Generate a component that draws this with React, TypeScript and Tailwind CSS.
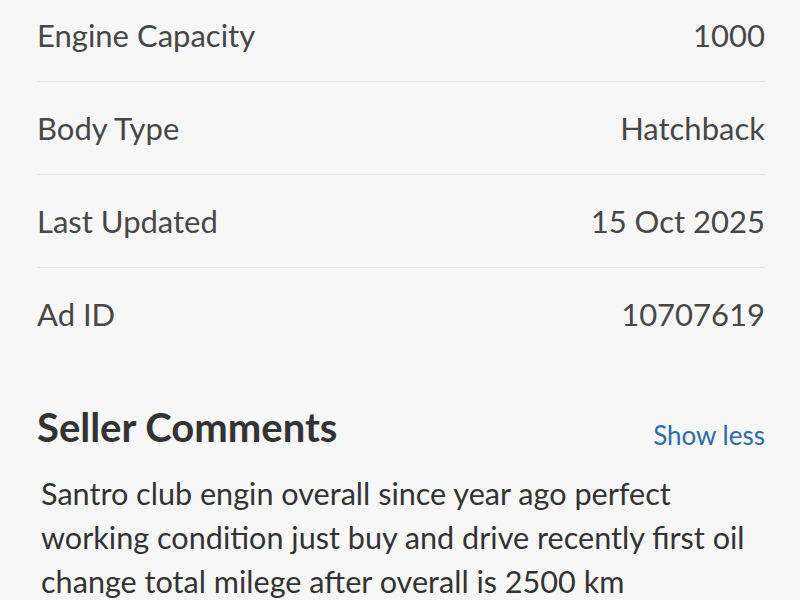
import React from 'react';

const specs = [
  { label: 'Engine Capacity', value: '1000' },
  { label: 'Body Type', value: 'Hatchback' },
  { label: 'Last Updated', value: '15 Oct 2025' },
  { label: 'Ad ID', value: '10707619' },
];

const SpecRow: React.FC<{ label: string; value: string; first?: boolean; last?: boolean }> = ({
  label,
  value,
  first,
  last,
}) => (
  <div
    className={`flex items-center justify-between ${first ? 'pt-[15px]' : 'pt-[26px]'} pb-[26px] ${
      last ? '' : 'border-b border-[#e6e6e6]'
    }`}
  >
    <span className="text-[31px] leading-[40px] text-[#474747]">{label}</span>
    <span className="text-[31px] leading-[40px] text-[#474747]">{value}</span>
  </div>
);

export default function App() {
  return (
    <div
      className="min-h-[600px] w-[800px] bg-[#f7f7f7] pl-[37px] pr-[35px] overflow-hidden"
      style={{ fontFamily: 'Lato, "Open Sans", sans-serif' }}
    >
      <div>
        {specs.map((s, i) => (
          <SpecRow key={s.label} label={s.label} value={s.value} first={i === 0} last={i === specs.length - 1} />
        ))}
      </div>

      <div className="mt-[43px] flex items-end justify-between">
        <h2 className="text-[40px] leading-[48px] font-bold text-[#333333]">Seller Comments</h2>
        <button className="text-[26px] leading-[36px] text-[#2b6cb0] mb-[-2px]">Show less</button>
      </div>

      <p className="mt-[21px] pl-[4px] text-[30.6px] leading-[44px] text-[#333333]">
        Santro club engin overall since year ago perfect working condition just buy and drive recently first oil
        change total milege after overall is 2500 km
      </p>
    </div>
  );
}
